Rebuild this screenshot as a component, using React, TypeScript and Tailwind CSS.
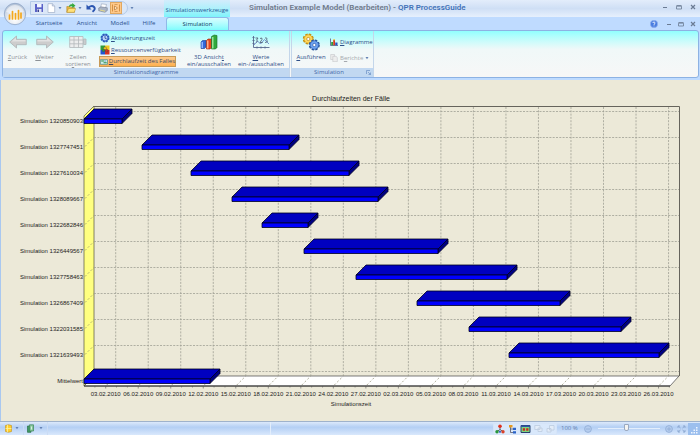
import type { ReactNode } from "react";

const bars = [
  { label: "Simulation 1320850903", from: 84, to: 122 },
  { label: "Simulation 1327747451", from: 142, to: 289 },
  { label: "Simulation 1327610034", from: 191, to: 349 },
  { label: "Simulation 1328089667", from: 232, to: 378 },
  { label: "Simulation 1322682846", from: 262, to: 308 },
  { label: "Simulation 1326449567", from: 304, to: 438 },
  { label: "Simulation 1327758463", from: 356, to: 507 },
  { label: "Simulation 1326867409", from: 417, to: 560 },
  { label: "Simulation 1322031585", from: 469, to: 621 },
  { label: "Simulation 1321639493", from: 509, to: 659 },
  { label: "Mittelwert", from: 84, to: 210 },
];

const dates = [
  "03.02.2010",
  "06.02.2010",
  "09.02.2010",
  "12.02.2010",
  "15.02.2010",
  "18.02.2010",
  "21.02.2010",
  "24.02.2010",
  "27.02.2010",
  "02.03.2010",
  "05.03.2010",
  "08.03.2010",
  "11.03.2010",
  "14.03.2010",
  "17.03.2010",
  "20.03.2010",
  "23.03.2010",
  "26.03.2010",
];

function Chart() {
  return (
    <svg
      viewBox="0 80 700 341"
      className="block w-full"
      fontFamily='"Liberation Sans", Arial, sans-serif'
      fontSize="6"
      fill="#222"
    >
      <text x="351" y="101" fontSize="7" textAnchor="middle">
        Durchlaufzeiten der Fälle
      </text>

      {/* walls and floor */}
      <path d="M84 116 94 106V376L84 386Z" fill="#ffff80" stroke="#55553a" strokeWidth=".7" />
      <path d="M84 386 94 376H679L670 386Z" fill="#fff" stroke="#444" strokeWidth=".7" />
      <path d="M94 106.500H679.500V376" fill="none" stroke="#66645c" />
      <path d="M84 386H670" stroke="#333" strokeWidth="1.200" />

      {/* grid */}
      <g stroke="#a09f94" strokeWidth=".8" strokeDasharray="2 1.300">
        {bars.map((bar, i) => (
          <path key={bar.label} d={`M94 ${111.5 + i * 26}H679`} />
        ))}
        {dates.map((date, i) => (
          <path key={date} d={`M${115.7 + i * 32.52} 107V376`} />
        ))}
      </g>
      <g stroke="#8c8b70" strokeWidth=".7" strokeDasharray="2 2">
        {bars.map((bar, i) => (
          <path key={bar.label} d={`M85 ${120.5 + i * 26}l9 -9`} />
        ))}
        {dates.map((date, i) => (
          <path key={date} d={`M${106.7 + i * 32.52} 385l9 -9`} />
        ))}
      </g>
      <g stroke="#555" strokeWidth=".6">
        {dates.map((date, i) => (
          <path
            key={date}
            d={`M${105.7 + i * 32.52} 386v2.500m-10.800 -2.500v1.500m21.600 -1.500v1.500`}
          />
        ))}
      </g>

      {/* bars */}
      {bars.map((bar, i) => {
        const y = 119 + i * 26;
        return (
          <g key={bar.label} stroke="#000020" strokeWidth=".8" strokeLinejoin="round">
            <path d={`M${bar.from} ${y}l10 -10H${bar.to + 10}l-10 10Z`} fill="#0000c0" />
            <path d={`M${bar.to} ${y}l10 -10v4.500l-10 10Z`} fill="#000080" />
            <path d={`M${bar.from} ${y}H${bar.to}v4.500H${bar.from}Z`} fill="#0000ff" />
          </g>
        );
      })}

      {bars.map((bar, i) => (
        <text key={bar.label} x="83" y={123 + i * 26} textAnchor="end">
          {bar.label}
        </text>
      ))}
      {dates.map((date, i) => (
        <text key={date} x={105.7 + i * 32.52} y="396" textAnchor="middle">
          {date}
        </text>
      ))}
      <text x="351" y="406" textAnchor="middle">
        Simulationszeit
      </text>
    </svg>
  );
}

function Caret() {
  return (
    <svg viewBox="0 0 4 3" className="h-[3px] w-1 shrink-0" fill="#6482b4">
      <path d="M.5 0H3.500L2 2.200Z" />
    </svg>
  );
}

function OrbIcon() {
  return (
    <svg viewBox="0 0 24 24" className="size-6">
      <defs>
        <radialGradient id="orb" cx=".5" cy=".75" r=".8">
          <stop offset="0" stopColor="#fff" />
          <stop offset=".5" stopColor="#dfe5ee" />
          <stop offset="1" stopColor="#a9b9d0" />
        </radialGradient>
      </defs>
      <circle cx="12" cy="12" r="10.700" fill="url(#orb)" stroke="#8da4c6" strokeWidth=".8" />
      <path d="M3 10a9.300 9.300 0 0 1 18 0q-9 3-18 0Z" fill="#fff" opacity=".5" />
      <path
        d="M6.500 13v4M9.500 9.500V17M12.500 11.500V17M15.500 8.500V17M18 11v5"
        stroke="#f5a81c"
        strokeWidth="1.700"
        strokeLinecap="round"
      />
    </svg>
  );
}

function SaveIcon() {
  return (
    <svg viewBox="0 0 10 10" className="size-[10px]">
      <path d="M1 1H9V9H1Z" fill="#5a63c8" />
      <path d="M3 1H7.500V4.300H3Z" fill="#f3f5ff" />
      <path d="M3 6H7.500V9H3Z" fill="#dfe3f5" />
      <path d="M3.500 6.500H5V9H3.500Z" fill="#3c4390" />
    </svg>
  );
}

function PageIcon() {
  return (
    <svg viewBox="0 0 10 10" className="size-[10px]">
      <path d="M2 .7H6.300L8.700 3V9.500H2Z" fill="#fff" stroke="#94a5c0" strokeWidth=".6" />
      <path d="M6.300 .7V3H8.700" fill="#d5deee" stroke="#94a5c0" strokeWidth=".6" />
    </svg>
  );
}

function OpenIcon() {
  return (
    <svg viewBox="0 0 10 10" className="size-[10px]">
      <path d="M.8 3.500H4L5 4.500H8.500V9.300H.8Z" fill="#e8b63c" stroke="#a87c20" strokeWidth=".5" />
      <path d="M.8 9.300 2.500 5.500H9.700L8.300 9.300Z" fill="#ffe17a" stroke="#b48a28" strokeWidth=".5" />
      <path d="M3 4Q3 .8 6.300 1.300V0L9.500 2.700 6.300 5V3.500Q4.500 3 3 4Z" fill="#35a83c" />
    </svg>
  );
}

function UndoIcon() {
  return (
    <svg viewBox="0 0 10 10" className="size-[10px]">
      <path d="M2.500 4.500Q6 1.800 8 4T6.500 8.700" fill="none" stroke="#2b55b0" strokeWidth="1.900" />
      <path d="M.5 1.500V6.500H5.500Z" fill="#2b55b0" />
    </svg>
  );
}

function PrintIcon() {
  return (
    <svg viewBox="0 0 10 10" className="size-[10px]">
      <path d="M3.500 .8 8.500 1.500 7.500 5H2.500Z" fill="#fff" stroke="#8090a8" strokeWidth=".5" />
      <path d="M.7 5 3 3.800 9.300 4.800V7.500L7 9.300 .7 7.800Z" fill="#aab4c4" stroke="#69758a" strokeWidth=".5" />
      <path d="M2 7 7 8.200" stroke="#f2e27a" strokeWidth=".8" />
    </svg>
  );
}

function FlowIcon() {
  return (
    <svg viewBox="0 0 10 10" className="size-[10px]">
      <path d="M1.500 1.500V8.500M8.500 1.500V8.500" stroke="#d08a3a" strokeWidth=".9" />
      <path d="M3.500 3V7L6.500 5Z" fill="#fff0d0" stroke="#b87430" strokeWidth=".7" />
      <path d="M3.500 1.500H6.500M3.500 8.500H6.500" stroke="#c98a44" strokeWidth=".7" />
    </svg>
  );
}

function ArrowIcon() {
  return (
    <svg viewBox="0 0 18 14" className="h-[14px] w-[18px]">
      <path d="M.7 7 7.500 1V4.300H17.300V9.700H7.500V13Z" fill="#cdcdcd" stroke="#aeb2b5" strokeWidth=".8" />
      <path d="M2.500 6.500 7 2.500V5H16.500V6.500Z" fill="#e2e2e2" />
    </svg>
  );
}

function TableIcon() {
  return (
    <svg viewBox="0 0 18 14" className="h-[14px] w-[18px]" fill="none" stroke="#b3b7ba" strokeWidth=".8">
      <path d="M.7 1.500H14V12.500H.7ZM.7 5H14M.7 8.800H14M5 1.500V12.500M9.500 1.500V12.500" fill="#eceded" />
      <path d="M14.500 4H17V9.500H14.500Z" fill="#c9cccd" />
    </svg>
  );
}

function ActivationIcon() {
  return (
    <svg viewBox="0 0 10 10" className="size-[10px]">
      <circle cx="5" cy="5" r="3.700" fill="#6d9be8" stroke="#2c5cba" strokeWidth="1.600" strokeDasharray="2 .9" />
      <circle cx="5" cy="5" r="3" fill="#b9d2fa" stroke="#2c5cba" strokeWidth=".9" />
      <path d="M5 3V5.200L6.800 6" fill="none" stroke="#234690" strokeWidth=".8" />
    </svg>
  );
}

function ResourceIcon() {
  return (
    <svg viewBox="0 0 10 10" className="size-[10px]">
      <path d="M.5 .5H5V5H.5Z" fill="#2d9e3a" />
      <path d="M5 .5H9.500V5H5Z" fill="#f2c81e" />
      <path d="M.5 5H5V9.500H.5Z" fill="#2456d0" />
      <path d="M5 5H9.500V9.500H5Z" fill="#d93222" />
      <circle cx="5" cy="3.300" r="1.500" fill="#f2c81e" stroke="#444" strokeWidth=".4" />
      <circle cx="6.700" cy="5.700" r="1.400" fill="#d93222" stroke="#444" strokeWidth=".4" />
      <circle cx="3.500" cy="5.500" r="1.200" fill="#2d9e3a" stroke="#444" strokeWidth=".4" />
    </svg>
  );
}

function DurationIcon() {
  return (
    <svg viewBox="0 0 10 10" className="size-[10px]">
      <path d="M.5 2H9.500V8H.5Z" fill="#cfeee8" stroke="#39828c" strokeWidth=".8" />
      <path d="M1.500 3.800H5M4.500 6H8.500" stroke="#2c8f4a" strokeWidth="1.300" />
      <path d="M5.500 3.800H7.500" stroke="#4478c4" strokeWidth=".9" />
    </svg>
  );
}

function BarsIcon() {
  return (
    <svg viewBox="0 0 18 16" className="h-4 w-[18px]" strokeWidth=".6">
      <path d="M1 8 2.500 6.500H6V13L4.500 14.500H1Z" fill="#3268d8" stroke="#1c3c90" />
      <path d="M1.500 8H3V14H1.500Z" fill="#8fb6ff" />
      <path d="M6.500 6.500 8 5H11.500V13.500L10 15H6.500Z" fill="#e8431e" stroke="#99270e" />
      <path d="M7 6.500H8.500V14.500H7Z" fill="#ffae88" />
      <path d="M11.500 2.500Q14 0 17 1.500V13.500L15.500 15H11.500Z" fill="#30a83c" stroke="#1a6b26" />
      <path d="M12 3H13.500V14.500H12Z" fill="#96e395" />
    </svg>
  );
}

function ValuesIcon() {
  return (
    <svg viewBox="0 0 18 16" className="h-4 w-[18px]" fill="none">
      <path d="M1.500 2V13.500H17.500M.5 3.500H2.500M.5 6.500H2.500M.5 9.500H2.500M5 12.500V14.500M9 12.500V14.500M13 12.500V14.500" stroke="#56688e" strokeWidth=".9" />
      <path d="M2 11 5.500 7 8.500 10 12.500 5.500 17 10" stroke="#6a88c8" strokeWidth=".9" />
      <path d="M3.500 4H6L4.500 6.200Q7 6.500 4 8.500M8 4.500Q10.500 3 10 5.500L8 8.500H10.700M13 4Q16 3.500 14.500 6 17 8 13 8.500" stroke="#4b5770" strokeWidth=".8" />
    </svg>
  );
}

function GearsIcon() {
  return (
    <svg viewBox="0 0 18 18" className="size-[18px]">
      <circle cx="6.300" cy="6" r="4.200" fill="#f6c63a" stroke="#c08c10" strokeWidth="2.600" strokeDasharray="2.200 1.099" />
      <circle cx="6.300" cy="6" r="4.200" fill="#ffd95c" stroke="#d8a01c" strokeWidth=".7" />
      <circle cx="6.300" cy="6" r="1.600" fill="#fff" stroke="#a8780c" strokeWidth=".6" />
      <circle cx="12.300" cy="12" r="4.200" fill="#4a86de" stroke="#245099" strokeWidth="2.600" strokeDasharray="2.200 1.099" />
      <circle cx="12.300" cy="12" r="4.200" fill="#6ea3f0" stroke="#3468b8" strokeWidth=".7" />
      <circle cx="12.300" cy="12" r="1.600" fill="#fff" stroke="#245099" strokeWidth=".6" />
    </svg>
  );
}

function DiagramIcon() {
  return (
    <svg viewBox="0 0 8 8" className="size-2">
      <path d="M.5 .5V7.500H8" fill="none" stroke="#3c4a78" strokeWidth=".7" />
      <path d="M1.200 4H3V7.200H1.200Z" fill="#2f9a3a" />
      <path d="M3.200 2H5V7.200H3.200Z" fill="#d83a20" />
      <path d="M5.200 4.500H7.500V7.200H5.200Z" fill="#2a50c0" />
      <path d="M3.500 1H4.700V2.500H3.500Z" fill="#eebd25" />
    </svg>
  );
}

function ReportIcon() {
  return (
    <svg viewBox="0 0 8 8" className="size-2" fill="#ededed" stroke="#c3c5c7" strokeWidth=".6">
      <path d="M.7 .5H4.500V5.500H.7Z" />
      <path d="M2.800 2.300H6L7.300 3.500V7.700H2.800Z" />
    </svg>
  );
}

function BigButton({ icon, children, className }: { icon: ReactNode; children: ReactNode; className: string }) {
  return (
    <button type="button" className={`flex shrink-0 flex-col items-center gap-1 ${className}`}>
      <span className="flex h-[17px] items-center">{icon}</span>
      <span className="whitespace-nowrap text-center leading-[7px]">{children}</span>
    </button>
  );
}

function WindowButtons({ className }: { className: string }) {
  return (
    <div className={`flex items-center ${className}`}>
      <button type="button" aria-label="Minimieren">
        <svg viewBox="0 0 6 6" className="size-[6px]" stroke="#6b7b93">
          <path d="M1 3.500H5" />
        </svg>
      </button>
      <button type="button" aria-label="Wiederherstellen">
        <svg viewBox="0 0 6 6" className="size-[6px]" fill="none" stroke="#6b7b93" strokeWidth=".8">
          <path d="M.5 1.500H5.500M.5 2.200H5.500V5H.5Z" />
        </svg>
      </button>
      <button type="button" aria-label="Schließen">
        <svg viewBox="0 0 6 6" className="size-[6px]" stroke="#6b7b93" strokeWidth="1.200">
          <path d="M1 1 5 5M5 1 1 5" />
        </svg>
      </button>
    </div>
  );
}

function TitleBar() {
  return (
    <header className="flex h-[17px] items-stretch bg-linear-to-b from-[#e3edfb] via-[#cfdff5] to-[#e6f0fd]">
      <div className="ml-[30px] mt-px flex h-[14px] w-[98px] shrink-0 items-center gap-[2px] rounded-r-full border border-[#b4cae8] bg-[#dbe7f7] pl-[3px]">
        <button type="button" aria-label="Speichern"><SaveIcon /></button>
        <button type="button" aria-label="Neu" className="flex items-center gap-[2px]"><PageIcon /><Caret /></button>
        <button type="button" aria-label="Öffnen" className="ml-[2px] flex items-center gap-[2px]"><OpenIcon /><Caret /></button>
        <button type="button" aria-label="Rückgängig" className="ml-[2px]"><UndoIcon /></button>
        <button type="button" aria-label="Drucken"><PrintIcon /></button>
        <button type="button" aria-label="Ablauf" className="border border-[#e0a860] bg-[#ffc98a]"><FlowIcon /></button>
      </div>
      <button type="button" aria-label="Anpassen" className="ml-[2px] flex w-[6px] shrink-0 items-center">
        <Caret />
      </button>
      <div className="ml-7 flex w-[66px] shrink-0 items-center justify-center bg-linear-to-b from-[#d3ecfc] to-[#7df4fb] pt-1 text-[6px] text-[#245a96]">
        Simulationswerkzeuge
      </div>
      <h1 className="grow whitespace-nowrap pl-[19px] font-['Roboto','Noto_Sans',sans-serif] text-[8px] font-semibold leading-[16px] text-[#707a8a]">
        Simulation Example Model (Bearbeiten) - <span className="text-[#4272b8]">QPR ProcessGuide</span>
      </h1>
      <WindowButtons className="gap-2 pr-1 pb-1" />
    </header>
  );
}

function Tabs() {
  return (
    <nav className="flex h-[13px] items-stretch bg-[#bfdbff] text-[6px] text-[#2a4f8e]">
      <button type="button" className="ml-[29px] w-10">Startseite</button>
      <button type="button" className="w-9">Ansicht</button>
      <button type="button" className="w-[30px]">Modell</button>
      <button type="button" className="w-7">Hilfe</button>
      <button
        type="button"
        className="ml-[3px] w-[63px] rounded-t-[3px] border border-b-0 border-[#8fb9e8] bg-linear-to-b from-[#d8fdff] to-[#7dfcfd] text-[#103860]"
      >
        Simulation
      </button>
      <div className="grow" />
      <button type="button" aria-label="Hilfe" className="mr-2">
        <svg viewBox="0 0 8 8" className="size-2">
          <circle cx="4" cy="4" r="3.700" fill="#4a7de0" stroke="#9db8ee" strokeWidth=".6" />
          <path d="M2.800 3Q3 1.800 4.200 2T4.800 3.700Q4 4 4 4.800M4 5.600V6.300" fill="none" stroke="#fff" strokeWidth=".9" />
        </svg>
      </button>
      <WindowButtons className="gap-[6px] pr-1" />
    </nav>
  );
}

function Ribbon() {
  return (
    <section className="bg-[#bfdbff] pl-[2px] pr-px pb-[2px]">
      <div className="flex h-12 rounded-[3px] border border-[#8db2e3] bg-linear-to-b from-[#90fffe] via-[#f0f8f8] via-40% to-[#f7f7f7] text-[6px] text-[#2f4f88]">
        <div className="flex w-[287px] shrink-0 flex-col border-r border-[#c4d6ea]">
          <div className="flex grow items-start pt-px">
            <BigButton icon={<ArrowIcon />} className="w-[29px] pt-px text-[#8d9297]">
              <u>Z</u>urück
            </BigButton>
            <BigButton icon={<span className="-scale-x-100"><ArrowIcon /></span>} className="w-[25px] pt-px text-[#8d9297]">
              <u>W</u>eiter
            </BigButton>
            <BigButton icon={<TableIcon />} className="w-[42px] pt-px text-[#8d9297]">
              Zeilen
              <br />
              so<u>r</u>tieren
            </BigButton>
            <div className="flex w-[82px] shrink-0 flex-col items-start leading-[12px]">
              <button type="button" className="flex h-3 items-center gap-px pl-px">
                <ActivationIcon /><span><u>A</u>ktivierungszeit</span>
              </button>
              <button type="button" className="flex h-3 items-center gap-px whitespace-nowrap pl-px">
                <ResourceIcon /><span><u>R</u>essourcenverfügbarkeit</span>
              </button>
              <button
                type="button"
                className="flex h-[11px] w-[77px] items-center gap-px whitespace-nowrap border border-[#c79a58] bg-linear-to-b from-[#fcc98d] to-[#ffb04c] leading-[9px] text-[#3d4a66]"
              >
                <DurationIcon /><span><u>D</u>urchlaufzeit des Falles</span>
              </button>
            </div>
            <BigButton icon={<BarsIcon />} className="w-[56px] pt-px">
              3D Ansich<u>t</u>
              <br />
              ein/ausschalten
            </BigButton>
            <BigButton icon={<ValuesIcon />} className="w-12 pt-px">
              <u>W</u>erte
              <br />
              ein-/ausschalten
            </BigButton>
          </div>
          <div className="h-[9px] bg-[#c1d8f1] text-center leading-[9px] text-[#4468a8]">Simulationsdiagramme</div>
        </div>
        <div className="ml-px flex w-[83px] shrink-0 flex-col border-x border-[#c4d6ea]">
          <div className="flex grow items-start pt-px">
            <BigButton icon={<GearsIcon />} className="w-[38px] pt-px">
              <u>A</u>usführen
            </BigButton>
            <div className="flex flex-col items-start gap-1 pt-1 whitespace-nowrap leading-3">
              <button type="button" className="flex h-3 items-center gap-[2px]">
                <DiagramIcon /><span><u>D</u>iagramme</span>
              </button>
              <button type="button" className="flex h-3 items-center gap-[2px] text-[#a5a9ae]">
                <ReportIcon /><span>B<u>e</u>richte</span><Caret />
              </button>
            </div>
          </div>
          <div className="flex h-[9px] items-center bg-[#c1d8f1] leading-[9px] text-[#4468a8]">
            <span className="grow text-center">Simulation</span>
            <button type="button" aria-label="Mehr" className="pr-[2px]">
              <svg viewBox="0 0 5 5" className="size-[5px]" fill="none" stroke="#6a8fc4" strokeWidth=".7">
                <path d="M.5 4V.5H4M2 2 4.500 4.500M4.500 2.500V4.500H2.500" />
              </svg>
            </button>
          </div>
        </div>
      </div>
    </section>
  );
}

function StatusBar() {
  return (
    <footer className="flex h-[14px] items-center border-t border-[#9fb2cb] bg-linear-to-b from-[#dce9fb] via-[#b4cff4] via-40% to-[#d9e8fc] text-[6px] text-[#6682b0]">
      <button type="button" aria-label="Daten" className="flex h-full w-6 shrink-0 items-center gap-[2px] border-r border-[#cbdcf4] pl-1">
        <svg viewBox="0 0 9 9" className="size-[9px]">
          <path d="M1.500 1.500Q4.500 0 7.500 1.500V7.500Q4.500 9 1.500 7.500Z" fill="#ffcf2e" stroke="#c2901c" strokeWidth=".6" />
          <path d="M3.500 1V8M1.500 4.500H7.500" stroke="#fff1a0" strokeWidth=".8" />
        </svg>
        <Caret />
      </button>
      <button type="button" aria-label="Ansichten" className="flex h-full w-6 shrink-0 items-center gap-1 border-r border-[#cbdcf4] pl-[2px]">
        <svg viewBox="0 0 9 9" className="size-[9px]" strokeWidth=".7">
          <path d="M1.500 2H5V8.300H1.500Z" fill="#3f9a67" stroke="#2b7049" />
          <path d="M3.500 .8H7.500V7H3.500Z" fill="#86c79d" stroke="#3c8557" />
          <path d="M5.500 2.500V5.500" stroke="#fff" />
        </svg>
        <Caret />
      </button>
      <div className="h-full w-[223px] border-r border-[#e2edfb]" />
      <div className="grow" />
      <div className="flex h-[12px] items-center gap-[3px] border border-[#d5e4f8] bg-[#d9e8fb] px-px">
        <button type="button" aria-label="Hierarchie">
          <svg viewBox="0 0 10 10" className="size-[10px]">
            <path d="M5 3V5.500L2 7.500M5 5.500 8 7.500" fill="none" stroke="#444" strokeWidth=".8" />
            <circle cx="5" cy="2.300" r="1.800" fill="#e0301e" />
            <circle cx="2" cy="7.800" r="1.700" fill="#28963c" />
            <circle cx="8" cy="7.800" r="1.700" fill="#d8422a" />
            <circle cx="5" cy="7.800" r="1.100" fill="#3560c8" />
          </svg>
        </button>
        <button type="button" aria-label="Baum">
          <svg viewBox="0 0 9 10" className="h-[10px] w-[9px]">
            <path d="M2.500 3V8.500H5M2.500 5H5" fill="none" stroke="#445" strokeWidth=".7" />
            <path d="M1 1H4.500V3.500H1Z" fill="#e59a20" />
            <path d="M5 3.800H8V6H5ZM5 7.300H8V9.500H5Z" fill="#2a62c8" />
          </svg>
        </button>
        <button type="button" aria-label="Diagramm">
          <svg viewBox="0 0 11 10" className="h-[10px] w-[11px]">
            <path d="M1 1.500H10V8.500H1Z" fill="#7ed67e" stroke="#27406e" />
            <path d="M1 1.500H10V3H1Z" fill="#2e54a4" />
            <path d="M2.800 4.300H5V6.700H2.800ZM6.200 4.300H8.400V6.700H6.200Z" fill="#cc2a1c" />
          </svg>
        </button>
        <button type="button" aria-label="Liste" disabled>
          <svg viewBox="0 0 9 9" className="size-[9px]" fill="#e4edf8" stroke="#bccbdf" strokeWidth=".8">
            <path d="M.8 1.500H6V5.500H.8ZM4 4H8V7.500H4Z" />
          </svg>
        </button>
        <button type="button" aria-label="Kopien" disabled>
          <svg viewBox="0 0 9 9" className="size-[9px]" fill="#e4edf8" stroke="#bccbdf" strokeWidth=".8">
            <path d="M3.500 1.500H8V6H3.500ZM1 4.500H5V8H1Z" />
          </svg>
        </button>
      </div>
      <span className="w-[27px] shrink-0 whitespace-nowrap pl-1">100 %</span>
      <button type="button" aria-label="Verkleinern" className="mr-[6px]">
        <svg viewBox="0 0 8 8" className="size-2" fill="#b5cdef" stroke="#8fabd4" strokeWidth=".8">
          <circle cx="4" cy="4" r="3.400" />
          <path d="M2 4H6" />
        </svg>
      </button>
      <input
        type="range"
        aria-label="Zoom"
        min="0"
        max="100"
        defaultValue="46"
        className="h-2 w-[62px] appearance-none bg-transparent [&::-webkit-slider-runnable-track]:h-px [&::-webkit-slider-runnable-track]:bg-[#e3eefc] [&::-webkit-slider-thumb]:-mt-1 [&::-webkit-slider-thumb]:h-[7px] [&::-webkit-slider-thumb]:w-[5px] [&::-webkit-slider-thumb]:appearance-none [&::-webkit-slider-thumb]:rounded-b-[2px] [&::-webkit-slider-thumb]:border [&::-webkit-slider-thumb]:border-[#9aa9c0] [&::-webkit-slider-thumb]:bg-[#f4f4f2]"
      />
      <button type="button" aria-label="Vergrößern" className="ml-[5px]">
        <svg viewBox="0 0 8 8" className="size-2" fill="#b5cdef" stroke="#8fabd4" strokeWidth=".8">
          <circle cx="4" cy="4" r="3.400" />
          <path d="M2 4H6M4 2V6" />
        </svg>
      </button>
      <button type="button" aria-label="Einpassen" className="ml-1">
        <svg viewBox="0 0 9 8" className="h-2 w-[9px]" fill="none" stroke="#8fabd4">
          <path d="M1 3V1H3M6 1H8V3M8 5V7H6M3 7H1V5M1 1 3.500 3M8 1 5.500 3M1 7 3.500 5M8 7 5.500 5" />
        </svg>
      </button>
      <svg viewBox="0 0 12 12" className="ml-[2px] size-3 bg-[#9cbfee]" fill="#f0f6ff">
        <path d="M8 4h1.500v1.500H8ZM5.500 6.500H7V8H5.500ZM8 6.500h1.500V8H8ZM3 9h1.500v1.500H3ZM5.500 9H7v1.500H5.500ZM8 9h1.500v1.500H8Z" />
      </svg>
    </footer>
  );
}

export default function App() {
  return (
    <div className="relative flex min-h-screen flex-col bg-[#ece9d8] font-['Open_Sans','Noto_Sans',sans-serif] [&_u]:underline-offset-1">
      <TitleBar />
      <Tabs />
      <button type="button" aria-label="Menü" className="absolute left-[3px] top-[2px]">
        <OrbIcon />
      </button>
      <Ribbon />
      <main className="grow shadow-[inset_1px_0_0_#a9c8f0]">
        <Chart />
      </main>
      <StatusBar />
    </div>
  );
}
